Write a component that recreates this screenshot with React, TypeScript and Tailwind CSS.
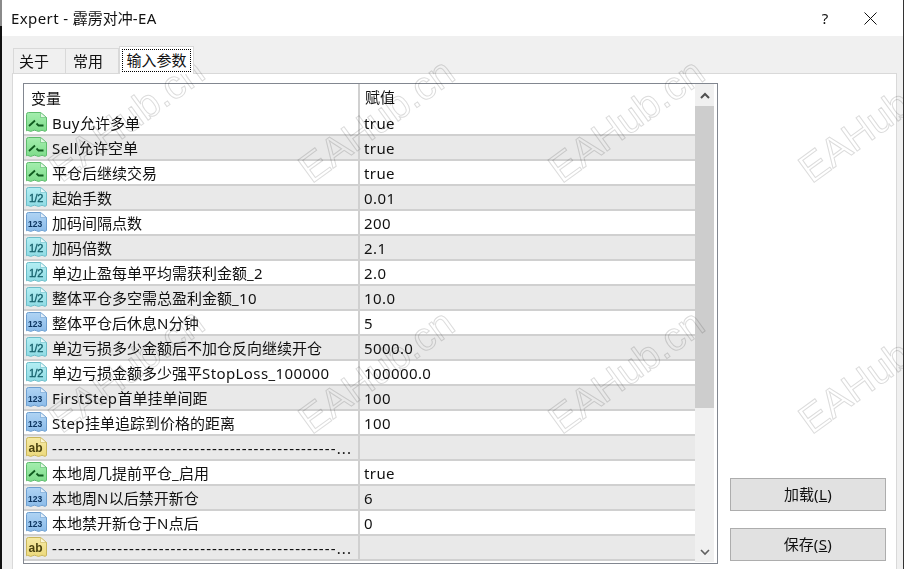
import React from 'react';

type Kind = 'bool' | 'float' | 'int' | 'str';

const DASHES = '------------------------------------------------...';

const rows: { kind: Kind; name: string; value: string }[] = [
  { kind: 'bool', name: 'Buy允许多单', value: 'true' },
  { kind: 'bool', name: 'Sell允许空单', value: 'true' },
  { kind: 'bool', name: '平仓后继续交易', value: 'true' },
  { kind: 'float', name: '起始手数', value: '0.01' },
  { kind: 'int', name: '加码间隔点数', value: '200' },
  { kind: 'float', name: '加码倍数', value: '2.1' },
  { kind: 'float', name: '单边止盈每单平均需获利金额_2', value: '2.0' },
  { kind: 'float', name: '整体平仓多空需总盈利金额_10', value: '10.0' },
  { kind: 'int', name: '整体平仓后休息N分钟', value: '5' },
  { kind: 'float', name: '单边亏损多少金额后不加仓反向继续开仓', value: '5000.0' },
  { kind: 'float', name: '单边亏损金额多少强平StopLoss_100000', value: '100000.0' },
  { kind: 'int', name: 'FirstStep首单挂单间距', value: '100' },
  { kind: 'int', name: 'Step挂单追踪到价格的距离', value: '100' },
  { kind: 'str', name: DASHES, value: '' },
  { kind: 'bool', name: '本地周几提前平仓_启用', value: 'true' },
  { kind: 'int', name: '本地周N以后禁开新仓', value: '6' },
  { kind: 'int', name: '本地禁开新仓于N点后', value: '0' },
  { kind: 'str', name: DASHES, value: '' },
];

const palette: Record<Kind, { top: string; bottom: string; stroke: string; corner: string }> = {
  bool: { top: '#a4eeae', bottom: '#7edc8b', stroke: '#5dbb6c', corner: '#e2f9e5' },
  float: { top: '#b4eef3', bottom: '#8fdbe4', stroke: '#6cbdc9', corner: '#e6f9fb' },
  int: { top: '#b0d4f4', bottom: '#8bbbe9', stroke: '#6d9fd0', corner: '#e3effb' },
  str: { top: '#f6eaa4', bottom: '#ecd97c', stroke: '#c9b65c', corner: '#fcf7d8' },
};

// wider latin runs, the original font is hinted to whole pixels
const Mixed = ({ text }: { text: string }) => (
  <>
    {text.split(/([\x00-\x7f]+)/).map((part, i) =>
      /^[\x00-\x7f]+$/.test(part) ? (
        <span key={i} className="tracking-[0.4px]">
          {part}
        </span>
      ) : (
        part
      )
    )}
  </>
);

const TypeIcon = ({ kind }: { kind: Kind }) => {
  const c = palette[kind];
  return (
    <svg width="21" height="21" viewBox="0 0 21 21" className="shrink-0">
      <defs>
        <linearGradient id={`icon-${kind}`} x1="0" y1="0" x2="0" y2="1">
          <stop offset="0" stopColor={c.top} />
          <stop offset="1" stopColor={c.bottom} />
        </linearGradient>
      </defs>
      <path
        d="M0.5 2.5 Q0.5 0.5 2.5 0.5 H14.5 L20.5 5.5 V18.5 Q19 20 17.5 18.8 Q16 17.6 14.5 18.8 Q12.5 20 10.5 18.8 Q8.5 17.6 6.5 18.8 Q4.5 20 3 18.8 Q1.5 18 0.5 18.8 Z"
        fill={`url(#icon-${kind})`}
        stroke={c.stroke}
      />
      <path d="M14.5 0.5 V5.5 H20.5 Z" fill={c.corner} stroke={c.stroke} strokeWidth="0.6" />
      {kind === 'bool' && (
        <path d="M3 14 L9 8.5 M10.5 11.5 L12.5 13.5 H17.5" fill="none" stroke="#0f5a1e" strokeWidth="1.8" />
      )}
      {kind === 'float' && (
        <text x="3" y="14.5" fontSize="11" letterSpacing="-0.5" fill="#15606b" stroke="#15606b" strokeWidth="0.3" fontFamily="'Liberation Sans',sans-serif">
          1/2
        </text>
      )}
      {kind === 'int' && (
        <text x="2" y="14.5" fontSize="8.5" fontWeight="700" fill="#0d3560" fontFamily="'Liberation Sans',sans-serif">
          123
        </text>
      )}
      {kind === 'str' && (
        <text x="2.5" y="14.5" fontSize="12" fontWeight="700" fill="#4c4410" fontFamily="'Liberation Sans',sans-serif">
          ab
        </text>
      )}
    </svg>
  );
};

const marks = [
  { left: 'left-[36px]', top: 'top-[99px]' },
  { left: 'left-[286px]', top: 'top-[100px]' },
  { left: 'left-[536px]', top: 'top-[100px]' },
  { left: 'left-[786px]', top: 'top-[100px]' },
  { left: 'left-[36px]', top: 'top-[350px]' },
  { left: 'left-[286px]', top: 'top-[351px]' },
  { left: 'left-[536px]', top: 'top-[351px]' },
  { left: 'left-[786px]', top: 'top-[351px]' },
];

export default function App() {
  return (
    <div className="relative flex h-[569px] w-[904px] flex-col overflow-hidden border-r border-r-[#333] bg-[#f0f0f0] font-['Noto_Sans','Noto_Sans_CJK_SC',sans-serif] text-[15px] text-[#111]">
      <div className="flex h-[36px] shrink-0 items-center bg-white pl-[11px]">
        <span className="flex-1">
          <Mixed text="Expert - 霹雳对冲-EA" />
        </span>
        <span className="w-[46px] text-center">?</span>
        <span className="flex w-[55px] justify-center pr-[10px]">
          <svg width="13" height="13" viewBox="0 0 13 13">
            <path d="M0.5 0.5 L12.5 12.5 M12.5 0.5 L0.5 12.5" stroke="#111" fill="none" />
          </svg>
        </span>
      </div>

      <div className="flex flex-1 flex-col pl-[12px] pr-[6px] pt-[10px]">
        <div className="flex h-[27px] shrink-0 items-end pl-[1px]">
          <div className="flex h-[25px] w-[53px] items-center border border-b-0 border-[#d9d9d9] pl-[5px]">关于</div>
          <div className="flex h-[25px] w-[53px] items-center border-t border-r border-[#d9d9d9] pl-[7px]">常用</div>
          <div className="relative z-10 -mb-px flex h-[28px] w-[75px] items-center justify-center border border-b-0 border-[#d9d9d9] bg-white p-[2px]">
            <span className="flex h-full w-full items-center justify-center border border-dotted border-black">输入参数</span>
          </div>
        </div>

        <div className="flex flex-1 items-start border border-b-0 border-[#d9d9d9] bg-white pl-[10px] pt-[9px]">
          <div className="flex h-[481px] w-[695px] shrink-0 border border-[#828790] bg-white">
            <div className="w-[671px] shrink-0">
              <div className="flex h-[27px] items-center">
                <div className="h-full w-[336px] border-r-2 border-[#d0d0d0] pl-[7px] leading-[29px]">变量</div>
                <div className="pl-[5px] leading-[29px]">赋值</div>
              </div>
              {rows.map((r, i) => (
                <div
                  key={i}
                  className={`flex h-[25px] border-b-2 border-[#d0d0d0] ${i % 2 === 1 ? 'bg-[#e9e9e9]' : 'bg-white'}`}
                >
                  <div className="flex w-[336px] items-center overflow-hidden border-r-2 border-[#d0d0d0] pl-[2px]">
                    <TypeIcon kind={r.kind} />
                    {r.kind === 'str' ? (
                      <span className="ml-[5px] whitespace-nowrap pt-px tracking-[1.1px]">{r.name}</span>
                    ) : (
                      <span className="ml-[5px] whitespace-nowrap pt-px">
                        <Mixed text={r.name} />
                      </span>
                    )}
                  </div>
                  <div className="flex items-center pl-[4px] pt-px tracking-[0.4px]">{r.value}</div>
                </div>
              ))}
            </div>
            <div className="flex h-[478px] w-[19px] shrink-0 flex-col bg-[#f0f0f0]">
              <div className="flex h-[22px] items-center justify-center">
                <svg width="10" height="7" viewBox="0 0 10 7">
                  <path d="M1 6 L5 2 L9 6" fill="none" stroke="#505050" strokeWidth="2" />
                </svg>
              </div>
              <div className="h-[302px] bg-[#cdcdcd]" />
              <div className="flex-1" />
              <div className="flex h-[20px] items-center justify-center">
                <svg width="10" height="7" viewBox="0 0 10 7">
                  <path d="M1 1 L5 5 L9 1" fill="none" stroke="#606060" strokeWidth="1.6" />
                </svg>
              </div>
            </div>
          </div>

          <div className="flex h-[478px] flex-1 flex-col justify-end gap-[17px] pl-[12px]">
            <button className="h-[33px] w-[156px] border border-[#adadad] bg-[#e1e1e1]">
              加载<span className="tracking-[0.4px]">(<span className="underline">L</span>)</span>
            </button>
            <button className="h-[33px] w-[156px] border border-[#adadad] bg-[#e1e1e1]">
              保存<span className="tracking-[0.4px]">(<span className="underline">S</span>)</span>
            </button>
          </div>
        </div>
      </div>

      {marks.map((m, i) => (
        <span
          key={i}
          className={`pointer-events-none absolute ${m.left} ${m.top} -rotate-[36deg] whitespace-nowrap font-['Liberation_Sans',sans-serif] text-[40px] leading-none text-transparent mix-blend-multiply [-webkit-text-stroke:1px_#dcdcdc]`}
        >
          EAHub.cn
        </span>
      ))}

      <div className="absolute left-0 top-0 h-[26px] w-[2px] bg-[#8a8a8a]" />
      <div className="absolute bottom-0 left-0 top-[26px] w-[2px] bg-[#111]" />
    </div>
  );
}
